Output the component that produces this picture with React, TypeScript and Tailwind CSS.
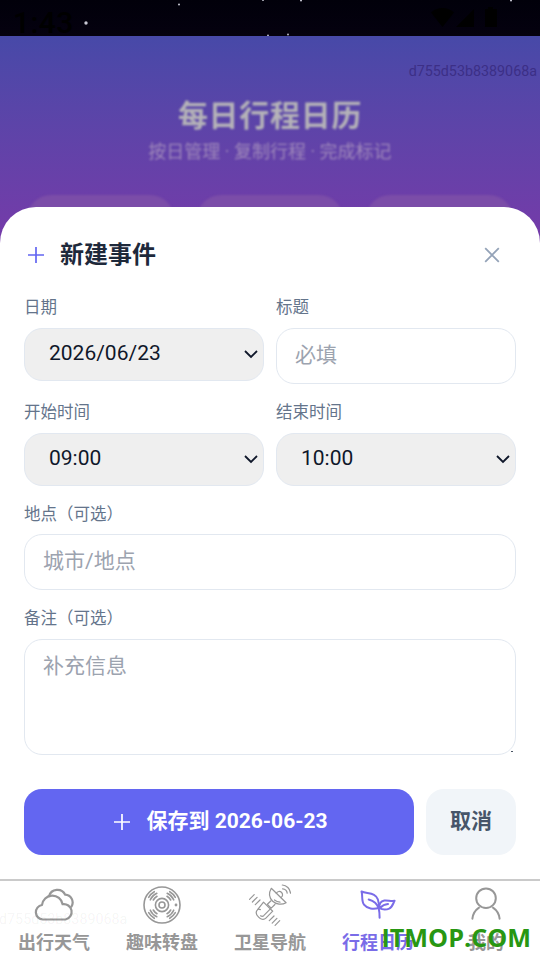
import React from 'react';

type TabKey = 'weather' | 'wheel' | 'satellite' | 'schedule' | 'mine';

const deviceId = 'd755d53b8389068a';

const tabs: { key: TabKey; label: string }[] = [
  { key: 'weather', label: '出行天气' },
  { key: 'wheel', label: '趣味转盘' },
  { key: 'satellite', label: '卫星导航' },
  { key: 'schedule', label: '行程日历' },
  { key: 'mine', label: '我的' },
];

function TabIcon({ name }: { name: TabKey }) {
  const common = {
    className: 'h-[42px] w-[42px] shrink-0',
    viewBox: '0 0 42 42',
    fill: 'none',
    stroke: 'currentColor',
    strokeLinecap: 'round' as const,
    strokeLinejoin: 'round' as const,
  };

  switch (name) {
    case 'weather':
      return (
        <svg {...common} strokeWidth={2.2}>
          <path d="M9.8 35.5A7.3 7.3 0 0 1 9 21a10.4 10.4 0 0 1 20.6-.8 7.8 7.8 0 0 1 3 15.3z" />
          <path d="M16 12.2a8.7 8.7 0 0 1 16.2-1.5 7.8 7.8 0 0 1 6.3 11.8" />
        </svg>
      );
    case 'wheel':
      return (
        <svg {...common} strokeWidth={1.6}>
          <circle cx="21" cy="21" r="18" />
          <circle cx="21" cy="21" r="6.6" />
          <circle cx="21" cy="21" r="3" />
          <circle cx="35" cy="21" r="0.6" fill="currentColor" />
          {[0, 90, 180, 270].map((angle) => (
            <g key={angle} transform={`rotate(${angle} 21 21)`}>
              <path d="M26 12.3A10 10 0 0 1 29.7 16" />
              <path d="M26.2 9.3A12.8 12.8 0 0 1 32.7 15.8" />
              <path d="M28.7 7.7A15.4 15.4 0 0 1 34.3 13.3" />
            </g>
          ))}
        </svg>
      );
    case 'satellite':
      return (
        <svg {...common} strokeWidth={1.2}>
          <path d="M22.3 4.3C19.6 9 20.3 14 23.7 17.2c3.5 3.3 9 4 13.4 1.5z" />
          <path d="M27.3 9.2c1-2 3.8-2.3 5.3-.7 1.5 1.7 1.2 4-.6 5.1" />
          <path d="M25.5 16c1.6 1.3 3.4 2 5.5 2.1" />
          <path d="M33.3 1c4.3.2 7.8 3.8 8.2 8.1M33.6 4.8c2.4.2 4.3 2 4.6 4.3" />
          <path d="m22 16.8-3.6 3.5 3.8 3.8 3.7-3.6" />
          <path d="m14.5 18.1 9.2 9.1-6.8 6.9c-2.5 2.5-5.5.9-7.3-.9-2-2-3.6-4.7-1.2-7.3z" />
          <path d="m9.4 25.1 2 .5M21.4 24.9l-6.7 6.8c-1 .9-2.2.7-3.2.1" />
          <path d="m.5 15.3 4.7-4.7M3.4 18l4.7-4.7M6.3 20.7 11 16" />
          <path d="m20.3 36.7 4.7-4.7M23.2 39.1l4.7-4.7M26.1 41.3l4.6-4.7" />
        </svg>
      );
    case 'schedule':
      return (
        <svg {...common} strokeWidth={2}>
          <path d="M4.5 7.5c4 1.8 8.7 1.2 12.5 3.3 4.8 2.7 5.2 8.5 4.6 13.2-5 1.5-11.5.8-14.6-3.3C4.2 16.9 5.9 11.9 4.5 7.5z" />
          <path d="M11.7 15.5c4.7 1.2 8.7 4.6 10.1 9.2.7 2.8.8 6 .8 9" />
          <path d="M22.3 24.2c-.2-3.7 1.4-7 5-7.6 3.4-.5 6.7.9 10.3.2-1.5 2.7-2.2 6.3-5.4 7.8-3.1 1.4-6.9 1.1-9.9-.4zM23.2 23.8c2.1-2.3 4.8-3.5 7.8-3.7" />
        </svg>
      );
    case 'mine':
      return (
        <svg {...common} strokeWidth={2}>
          <circle cx="21" cy="14.2" r="9.8" />
          <path d="M7.4 34.7c.5-4.8 2.8-8.4 6.6-11M28 23.7c3.8 2.6 6.1 6.2 6.6 11" />
        </svg>
      );
  }
}

function PlusIcon() {
  return (
    <svg className="h-6 w-6 shrink-0" viewBox="0 0 24 24" fill="none" stroke="currentColor" strokeWidth={1.7}>
      <path d="M12 4v16M4 12h16" />
    </svg>
  );
}

function Label({ children }: { children: React.ReactNode }) {
  return <div className="h-6 pt-px text-[16.5px] leading-6 text-[#64748b]">{children}</div>;
}

function SelectBox({ label, value }: { label: string; value: string }) {
  return (
    <div>
      <Label>{label}</Label>
      <button className="mt-[9px] flex h-[53px] w-full items-center justify-between rounded-[18px] border border-[#e2e8f0] bg-[#efefef] pr-1 pb-0.5 pl-6 text-[21px] leading-6 text-[#0f172a]">
        <span className="pb-px">{value}</span>
        <svg className="h-4 w-4" viewBox="0 0 16 16" fill="none" stroke="currentColor" strokeWidth={1.8}>
          <path d="m2 5 6 6 6-6" />
        </svg>
      </button>
    </div>
  );
}

const inputClass =
  'block h-14 w-full rounded-[18px] border border-[#e2e8f0] bg-white px-[18px] pb-0.5 text-[21px] text-[#0f172a] outline-none placeholder:text-[#9ca3af]';

function StatusBar() {
  return (
    <div className="relative flex h-9 shrink-0 justify-between bg-linear-to-b from-[#01000a] to-[#05010f] pr-[41px] pl-[13px]">
      <span className="mt-[10px] h-[26px] text-[30px] leading-[26px] font-medium tracking-[0.4px] text-black">1:43</span>
      <svg className="mt-[7px] h-5 w-[68px] text-black" viewBox="0 0 68 20" fill="currentColor">
        <path d="M0 5.5C6-.5 17-.5 23 5.5L11.5 20zM43 2v18H25zM54 2h3V0h5v2h4v18H54z" />
      </svg>
      <svg className="absolute inset-0 h-9 w-[540px]" viewBox="0 0 540 36" fill="#c9c8d4">
        <circle cx="86" cy="23" r="1.7" />
        <circle cx="179" cy="4.5" r="1" />
        <circle cx="263" cy="0" r="1" />
        <circle cx="301" cy="0.5" r="1" />
        <circle cx="511" cy="0.5" r="1" />
        <circle cx="288" cy="34.5" r="0.9" />
        <circle cx="268" cy="35.5" r="0.9" />
      </svg>
    </div>
  );
}

export default function App() {
  return (
    <div className="relative flex h-[960px] w-[540px] flex-col overflow-hidden bg-white font-[Roboto,'Noto_Sans_CJK_SC',sans-serif]">
      <StatusBar />

      {/* Page header, dimmed behind the sheet */}
      <header className="relative h-[211px] shrink-0 overflow-hidden bg-linear-to-b from-[#4749a8] to-[#763aa9] text-center">
        <span className="absolute top-[25px] right-[3px] text-[14.3px] leading-5 text-[#3c2f86]">{deviceId}</span>
        <div className="pt-[58px] blur-[1px]">
          <h1 className="text-[30px] leading-[44px] font-bold tracking-[0.7px] text-[#b5b3b8]">每日行程日历</h1>
          <p className="text-[18px] leading-7 text-[#9f88bb]">按日管理 · 复制行程 · 完成标记</p>
          <div className="mt-[29px] grid grid-cols-3 gap-[23px] px-[27px]">
            <div className="h-20 rounded-[24px] bg-[#7b4da8]" />
            <div className="h-20 rounded-[24px] bg-[#7b4da8]" />
            <div className="h-20 rounded-[24px] bg-[#7b4da8]" />
          </div>
        </div>
      </header>

      {/* New event sheet */}
      <section className="relative -mt-10 flex h-[672px] shrink-0 flex-col rounded-t-[36px] bg-white px-6 pt-6">
        <div className="flex h-12 items-center justify-between pr-3">
          <div className="flex items-center gap-3">
            <span className="text-[#6366f1]">
              <PlusIcon />
            </span>
            <h2 className="text-[24px] leading-9 font-bold text-[#1e293b]">新建事件</h2>
          </div>
          <svg className="h-6 w-6 text-[#94a3b8]" viewBox="0 0 24 24" fill="none" stroke="currentColor" strokeWidth={1.8}>
            <path d="m5.2 5.2 13.6 13.6M18.8 5.2 5.2 18.8" />
          </svg>
        </div>

        <div className="mt-4 grid grid-cols-2 gap-3">
          <SelectBox label="日期" value="2026/06/23" />
          <div>
            <Label>标题</Label>
            <input className={`mt-[9px] ${inputClass}`} placeholder="必填" />
          </div>
        </div>

        <div className="mt-4 grid grid-cols-2 gap-3">
          <SelectBox label="开始时间" value="09:00" />
          <SelectBox label="结束时间" value="10:00" />
        </div>

        <div className="mt-4">
          <Label>地点（可选）</Label>
          <input className={`mt-2 ${inputClass}`} placeholder="城市/地点" />
        </div>

        <div className="relative mt-4">
          <Label>备注（可选）</Label>
          <textarea
            className="mt-[9px] block h-[116px] w-full resize-none rounded-[18px] border border-[#e2e8f0] bg-white px-[18px] pt-[11px] text-[21px] leading-[31px] text-[#0f172a] outline-none placeholder:text-[#9ca3af]"
            placeholder="补充信息"
          />
          <span className="absolute right-[3px] bottom-[3px] h-px w-0.5 bg-gray-600" />
        </div>

        <div className="mt-[34px] flex gap-3 text-[21px] font-bold">
          <button className="flex h-[66px] flex-1 items-center justify-center gap-3 rounded-[18px] bg-[#6366f1] text-white">
            <PlusIcon />
            <span className="pb-px">保存到 2026-06-23</span>
          </button>
          <button className="h-[66px] w-[90px] rounded-[18px] bg-[#f1f5f9] pb-px text-[#475569]">取消</button>
        </div>
      </section>

      {/* Bottom tabs */}
      <nav className="relative grid h-[81px] grid-cols-5 border-t-2 border-[#cacaca] bg-white">
        {tabs.map((tab) => (
          <div
            key={tab.key}
            className={`flex flex-col items-center pt-[3px] ${tab.key === 'schedule' ? 'text-[#7a6ce8]' : 'text-[#979797]'}`}
          >
            <TabIcon name={tab.key} />
            <span className="mt-[3px] text-[18px] leading-7 font-bold">{tab.label}</span>
          </div>
        ))}
        <span className="absolute top-[28px] -left-px text-[14.3px] leading-5 text-black/5">{deviceId}</span>
        <span className="absolute top-[40px] right-[9px] font-['Open_Sans',sans-serif] text-[25.2px] leading-8 font-bold text-[#289712]">
          ITMOP.COM
        </span>
      </nav>
    </div>
  );
}
